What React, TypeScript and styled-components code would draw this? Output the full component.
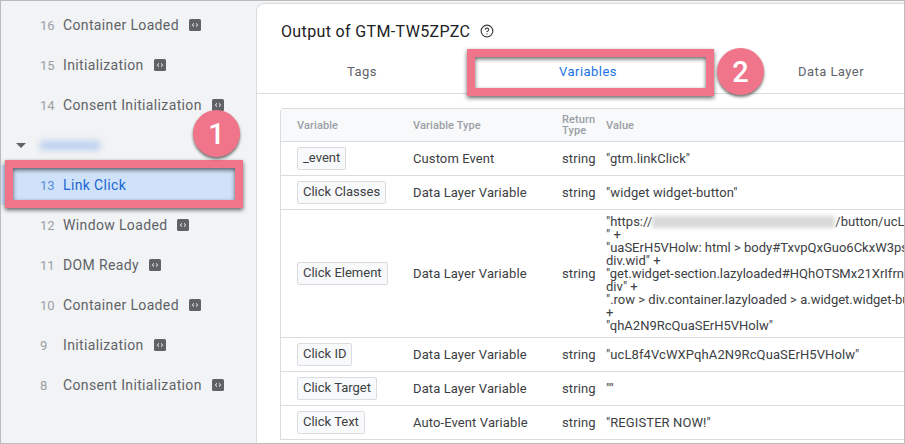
import React from 'react';
import styled, { createGlobalStyle } from 'styled-components';
import { CircleHelp } from 'lucide-react';

const GlobalStyle = createGlobalStyle`
html, body {
  margin: 0;
  padding: 0;
  background: #fff;
}
`

const Frame = styled.div`
position: relative;
box-sizing: border-box;
width: 905px;
height: 444px;
display: flex;
overflow: hidden;
background: #f1f3f4;
border: 1px solid #b9bbbd;
font-family: Roboto, "Liberation Sans", sans-serif;
`
const Sidebar = styled.div`
width: 255px;
flex: none;
box-sizing: border-box;
padding-top: 4px;
`
const EventRow = styled.div<{ $active?: boolean }>`
height: 40px;
width: 234px;
display: flex;
align-items: center;
box-sizing: border-box;
padding-left: 39px;
font-size: 14px;
letter-spacing: 0.36px;
color: ${p => (p.$active ? '#1967d2' : '#5f6368')};
background: ${p => (p.$active ? '#cfe2fa' : 'transparent')};
`
const EventNumber = styled.span<{ $active?: boolean }>`
width: 23px;
flex: none;
font-size: 13px;
letter-spacing: 0;
color: ${p => (p.$active ? '#5b8fd9' : '#9aa0a6')};
`
const GroupRow = styled.div`
height: 40px;
display: flex;
align-items: center;
box-sizing: border-box;
padding-left: 15px;
`
const Caret = styled.span`
width: 0;
height: 0;
border-left: 5px solid transparent;
border-right: 5px solid transparent;
border-top: 5px solid #5f6368;
`
const BlurredLabel = styled.span`
width: 60px;
height: 9px;
margin-left: 14px;
background: #bcd0f0;
filter: blur(3px);
`
const Badge = styled.svg`
width: 12px;
height: 12px;
margin-left: 10px;
flex: none;
`
const Main = styled.div`
flex: 1;
min-width: 0;
margin-top: 2px;
background: #fff;
border-top: 1px solid #dadce0;
border-left: 1px solid #dadce0;
border-top-left-radius: 8px;
overflow: hidden;
`
const TitleRow = styled.div`
height: 44px;
box-sizing: border-box;
padding: 10px 0 0 24px;
display: flex;
align-items: center;
gap: 10px;
font-size: 16px;
letter-spacing: 0.36px;
color: #202124;
`
const Tabs = styled.div`
display: grid;
grid-template-columns: 210px 242px 244px;
height: 45px;
width: 100%;
border-bottom: 1px solid #dadce0;
`
const Tab = styled.div<{ $active?: boolean }>`
display: flex;
align-items: center;
justify-content: center;
padding-top: 1px;
font-size: 13px;
letter-spacing: 0.45px;
color: ${p => (p.$active ? '#1a73e8' : '#5f6368')};
`
const TableBox = styled.div`
margin: 14px 0 0 23px;
width: 760px;
border: 1px solid #dadce0;
border-bottom: none;
border-radius: 4px 4px 0 0;
`
const HeaderRow = styled.div`
display: grid;
grid-template-columns: 116px 149px 44px 1fr;
height: 32px;
padding-left: 16px;
align-items: center;
background: #f8f9fa;
border-bottom: 1px solid #dadce0;
font-size: 11px;
line-height: 11px;
font-weight: 500;
letter-spacing: 0.1px;
color: #9aa0a6;
`
const Row = styled.div<{ $tall?: boolean }>`
display: grid;
grid-template-columns: 116px 149px 44px 1fr;
height: ${p => (p.$tall ? '127px' : '33px')};
padding-left: 16px;
align-items: center;
border-bottom: 1px solid #dadce0;
font-size: 13px;
color: #3c4043;
`
const Chip = styled.span`
justify-self: start;
box-sizing: border-box;
height: 23px;
margin-top: -1px;
padding: 0 5px 2px;
display: flex;
align-items: center;
background: #f8f9fa;
border: 1px solid #dadce0;
border-radius: 2px;
`
const Cell = styled.span`
white-space: nowrap;
letter-spacing: 0.1px;
`
const ValueLines = styled.div`
white-space: pre;
font-size: 13px;
line-height: 12.9px;
padding-top: 2px;
`
const BlurredUrl = styled.span`
display: inline-block;
width: 183px;
height: 12px;
vertical-align: -2px;
background: #d9d9d9;
filter: blur(2px);
`
const Callout = styled.div<{ $left: number; $top: number; $width: number; $height: number }>`
position: absolute;
left: ${p => p.$left}px;
top: ${p => p.$top}px;
width: ${p => p.$width}px;
height: ${p => p.$height}px;
box-sizing: border-box;
border: 8px solid #f0758a;
filter: drop-shadow(0 2px 2px rgba(0, 0, 0, 0.6));
`
const Marker = styled.div<{ $left: number; $top: number }>`
position: absolute;
left: ${p => p.$left}px;
top: ${p => p.$top}px;
width: 47px;
height: 47px;
border-radius: 50%;
display: flex;
align-items: center;
justify-content: center;
background: #f0758a;
box-shadow: 0 2px 3px rgba(0, 0, 0, 0.55);
color: #fff;
font-family: Roboto, "Liberation Sans", sans-serif;
font-weight: 500;
font-size: 29px;
`

const CodeBadge = () => (
    <Badge viewBox="0 0 12 12">
        <rect x="0" y="0" width="12" height="12" rx="1.5" fill="#5f6368" />
        <path d="M5 4.4 3.3 6 5 7.6M7 4.4 8.7 6 7 7.6" fill="none" stroke="#fff" strokeWidth="1" />
    </Badge>
);

const beforeEvents = [
    { n: 16, label: 'Container Loaded' },
    { n: 15, label: 'Initialization' },
    { n: 14, label: 'Consent Initialization' },
];
const afterEvents = [
    { n: 12, label: 'Window Loaded' },
    { n: 11, label: 'DOM Ready' },
    { n: 10, label: 'Container Loaded' },
    { n: 9, label: 'Initialization' },
    { n: 8, label: 'Consent Initialization' },
];

export default function App() {
    return (
        <Frame>
            <GlobalStyle />
            <Sidebar>
                {beforeEvents.map(e => (
                    <EventRow key={e.n}>
                        <EventNumber>{e.n}</EventNumber>
                        {e.label}
                        <CodeBadge />
                    </EventRow>
                ))}
                <GroupRow>
                    <Caret />
                    <BlurredLabel />
                </GroupRow>
                <EventRow $active>
                    <EventNumber $active>13</EventNumber>
                    Link Click
                </EventRow>
                {afterEvents.map(e => (
                    <EventRow key={e.n}>
                        <EventNumber>{e.n}</EventNumber>
                        {e.label}
                        <CodeBadge />
                    </EventRow>
                ))}
            </Sidebar>
            <Main>
                <TitleRow>
                    Output of GTM-TW5ZPZC
                    <CircleHelp size={14} color="#3c4043" />
                </TitleRow>
                <Tabs>
                    <Tab>Tags</Tab>
                    <Tab $active>Variables</Tab>
                    <Tab>Data Layer</Tab>
                </Tabs>
                <TableBox>
                    <HeaderRow>
                        <span>Variable</span>
                        <span>Variable Type</span>
                        <span>Return<br />Type</span>
                        <span>Value</span>
                    </HeaderRow>
                    <Row>
                        <Chip>_event</Chip>
                        <Cell>Custom Event</Cell>
                        <Cell>string</Cell>
                        <Cell>"gtm.linkClick"</Cell>
                    </Row>
                    <Row>
                        <Chip>Click Classes</Chip>
                        <Cell>Data Layer Variable</Cell>
                        <Cell>string</Cell>
                        <Cell>"widget widget-button"</Cell>
                    </Row>
                    <Row $tall>
                        <Chip>Click Element</Chip>
                        <Cell>Data Layer Variable</Cell>
                        <Cell>string</Cell>
                        <ValueLines>
                            "https://<BlurredUrl />/button/ucL8f4VcWXPqhA2N9RcQ{'\n'}
                            {'" +\n'}
                            {'"uaSErH5VHolw: html > body#TxvpQxGuo6CkxW3ps\n'}
                            {'div.wid" +\n'}
                            {'"get.widget-section.lazyloaded#HQhOTSMx21XrIfrn\n'}
                            {'div" +\n'}
                            {'".row > div.container.lazyloaded > a.widget.widget-button\n'}
                            {'+\n'}
                            {'"qhA2N9RcQuaSErH5VHolw"'}
                        </ValueLines>
                    </Row>
                    <Row>
                        <Chip>Click ID</Chip>
                        <Cell>Data Layer Variable</Cell>
                        <Cell>string</Cell>
                        <Cell>"ucL8f4VcWXPqhA2N9RcQuaSErH5VHolw"</Cell>
                    </Row>
                    <Row>
                        <Chip>Click Target</Chip>
                        <Cell>Data Layer Variable</Cell>
                        <Cell>string</Cell>
                        <Cell>""</Cell>
                    </Row>
                    <Row>
                        <Chip>Click Text</Chip>
                        <Cell>Auto-Event Variable</Cell>
                        <Cell>string</Cell>
                        <Cell>"REGISTER NOW!"</Cell>
                    </Row>
                </TableBox>
            </Main>
            <Callout $left={4} $top={159} $width={238} $height={48} />
            <Callout $left={466} $top={48} $width={247} $height={47} />
            <Marker $left={192} $top={109}>1</Marker>
            <Marker $left={716} $top={47}>2</Marker>
        </Frame>
    );
}
